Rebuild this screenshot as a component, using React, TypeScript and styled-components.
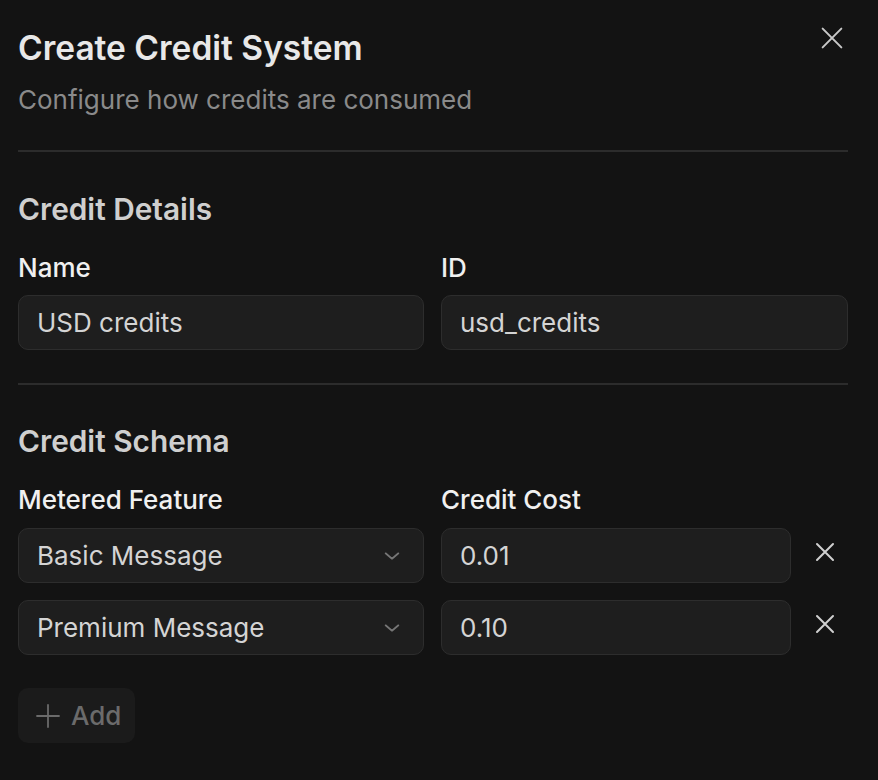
import React from "react";
import styled, { createGlobalStyle } from "styled-components";

const Global = createGlobalStyle`
  html, body { margin: 0; padding: 0; background: #131313; }
  body { font-family: Inter, "Noto Sans", sans-serif; -webkit-font-smoothing: antialiased; }
  * { box-sizing: border-box; }
`;

const Dialog = styled.div`
  position: relative;
  width: 878px;
  min-height: 780px;
  background: #131313;
  padding: 28px 30px 0 18px;
  display: flex;
  flex-direction: column;
`;

const CloseButton = styled.button`
  position: absolute;
  top: 24px;
  right: 32px;
  width: 28px;
  height: 28px;
  padding: 0;
  border: none;
  background: transparent;
  color: #c9c9c9;
  display: flex;
  align-items: center;
  justify-content: center;
`;

const Title = styled.h1`
  margin: 0;
  font-size: 33.5px;
  line-height: 40px;
  font-weight: 600;
  color: #e8e8e8;
`;

const Subtitle = styled.p`
  margin: 16px 0 0;
  font-size: 26px;
  line-height: 32px;
  font-weight: 400;
  color: #8a8a8a;
`;

const Divider = styled.hr<{ $top: number }>`
  margin: ${(p) => p.$top}px 0 0;
  border: none;
  height: 2px;
  background: #2c2c2c;
`;

const SectionTitle = styled.h2<{ $top: number }>`
  margin: ${(p) => p.$top}px 0 0;
  font-size: 29.8px;
  line-height: 36px;
  font-weight: 600;
  color: #cfcfcf;
`;

const FieldGrid = styled.div`
  margin-top: 25px;
  display: grid;
  grid-template-columns: 406px 407px;
  column-gap: 17px;
`;

const Label = styled.div`
  font-size: 26px;
  line-height: 32px;
  font-weight: 500;
  color: #f0f0f0;
  margin-bottom: 11px;
`;

const Field = styled.div`
  display: flex;
  flex-direction: column;
`;

const Box = styled.div`
  height: 55px;
  width: 100%;
  background: #1e1e1e;
  border: 1.5px solid #2d2d2d;
  border-radius: 10px;
  padding: 0 20px 0 18px;
  display: flex;
  align-items: center;
  justify-content: space-between;
  font-size: 26px;
  color: #d4d4d4;
  font-weight: 400;
`;

const SchemaHeader = styled.div`
  margin-top: 25px;
  display: grid;
  grid-template-columns: 406px 350px;
  column-gap: 17px;
`;

const SchemaLabel = styled(Label)`
  margin-bottom: 12px;
`;

const Rows = styled.div`
  display: flex;
  flex-direction: column;
  gap: 17px;
`;

const Row = styled.div`
  display: grid;
  grid-template-columns: 406px 350px 57px;
  column-gap: 17px;
  align-items: center;
`;

const RemoveButton = styled.button`
  border: none;
  background: transparent;
  color: #d0d0d0;
  padding: 0;
  width: 57px;
  height: 55px;
  display: flex;
  align-items: center;
  justify-content: center;
  margin-left: -12px;
  margin-top: -7px;
`;

const AddButton = styled.button`
  margin-top: 33px;
  align-self: flex-start;
  height: 55px;
  width: 117px;
  border: none;
  border-radius: 10px;
  background: #1b1b1b;
  color: #6b6b6b;
  font-family: inherit;
  font-size: 26px;
  font-weight: 500;
  display: flex;
  align-items: center;
  gap: 11px;
  padding: 0 0 0 18px;
`;

const Cross = ({ size, stroke }: { size: number; stroke: number }) => (
  <svg width={size} height={size} viewBox="0 0 24 24" fill="none" stroke="currentColor" strokeWidth={stroke} strokeLinecap="round">
    <path d="M4 4l16 16M20 4L4 20" />
  </svg>
);

const Chevron = () => (
  <svg width="22" height="22" viewBox="0 0 24 24" fill="none" stroke="#767676" strokeWidth="1.8" strokeLinecap="round" strokeLinejoin="round">
    <path d="M5 9l7 6 7-6" />
  </svg>
);

const Plus = () => (
  <svg width="24" height="24" viewBox="0 0 24 24" fill="none" stroke="currentColor" strokeWidth="1.8" strokeLinecap="round">
    <path d="M12 1v22M1 12h22" />
  </svg>
);

const rows = [
  { feature: "Basic Message", cost: "0.01" },
  { feature: "Premium Message", cost: "0.10" },
];

export default function App() {
  return (
    <>
      <Global />
      <Dialog>
        <CloseButton aria-label="Close">
          <Cross size={28} stroke={1.7} />
        </CloseButton>
        <Title>Create Credit System</Title>
        <Subtitle>Configure how credits are consumed</Subtitle>
        <Divider $top={34} />
        <SectionTitle $top={39}>Credit Details</SectionTitle>
        <FieldGrid>
          <Field>
            <Label>Name</Label>
            <Box>USD credits</Box>
          </Field>
          <Field>
            <Label>ID</Label>
            <Box>usd_credits</Box>
          </Field>
        </FieldGrid>
        <Divider $top={33} />
        <SectionTitle $top={38}>Credit Schema</SectionTitle>
        <SchemaHeader>
          <SchemaLabel>Metered Feature</SchemaLabel>
          <SchemaLabel>Credit Cost</SchemaLabel>
        </SchemaHeader>
        <Rows>
          {rows.map((r) => (
            <Row key={r.feature}>
              <Box>
                <span>{r.feature}</span>
                <Chevron />
              </Box>
              <Box>{r.cost}</Box>
              <RemoveButton aria-label="Remove">
                <Cross size={24} stroke={2} />
              </RemoveButton>
            </Row>
          ))}
        </Rows>
        <AddButton>
          <Plus />
          Add
        </AddButton>
      </Dialog>
    </>
  );
}
